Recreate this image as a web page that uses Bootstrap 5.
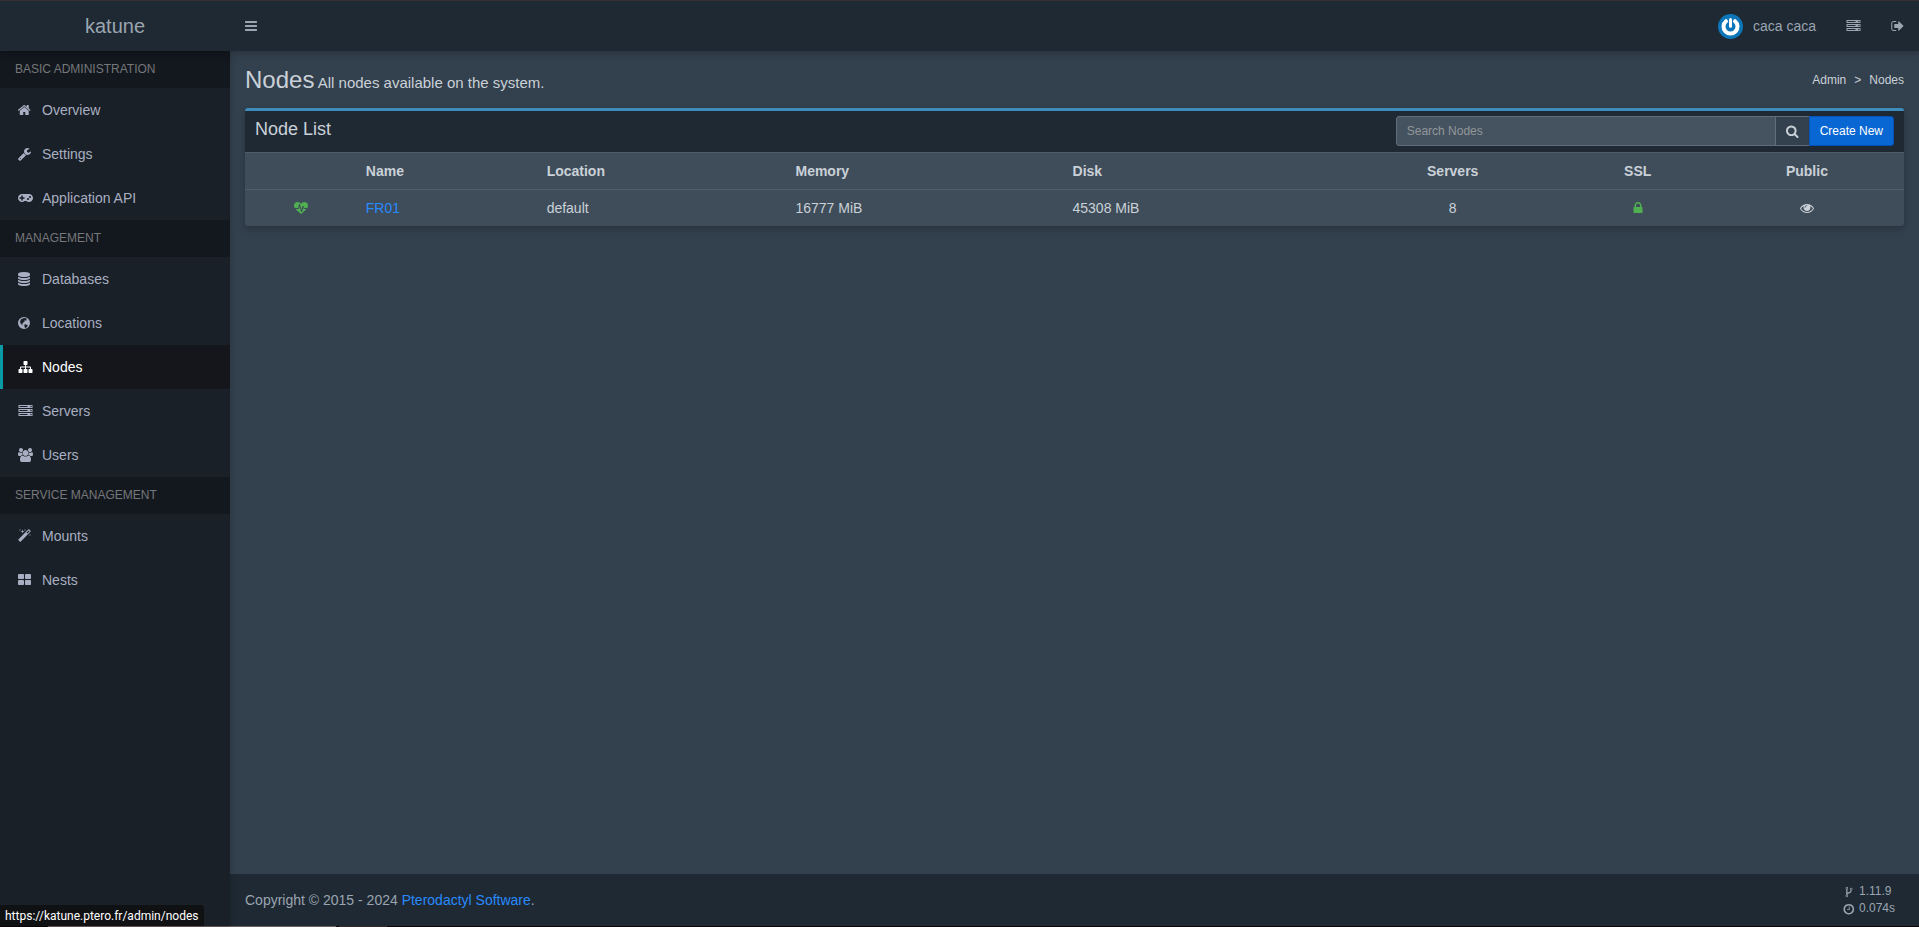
<!DOCTYPE html>
<html lang="en">
<head>
<meta charset="utf-8">
<meta name="viewport" content="width=device-width, initial-scale=1">
<title>Nodes - katune</title>
<link rel="stylesheet" href="https://cdn.jsdelivr.net/npm/bootstrap@5.3.0/dist/css/bootstrap.min.css">
<style>
  :root { --side: 230px; --ink: #cad1d8; --muted: #9aa5b1; --dark: #1f2933; --line: #4f5d6a; --drop: 0 4px 8px 0 rgba(0,0,0,.12), 0 2px 4px 0 rgba(0,0,0,.08); }
  body { font-family: "Liberation Sans", Arial, sans-serif; font-size: 14px; line-height: 20px; color: var(--ink); background: #33404d; }
  a { color: #288afb; text-decoration: none; }
  .icon { width: 14px; height: 14px; fill: currentColor; flex: none; display: block; }
  .icon.wide { width: 15px; }
  .icon.slim { width: 13px; }

  .topbar { background: var(--dark); border-top: 1px solid #35302f; box-shadow: var(--drop); position: relative; z-index: 3; }
  .topbar a, .topbar button { color: var(--muted); padding: 15px; }
  .topbar .logo { width: var(--side); font-size: 20px; text-align: center; }
  .topbar .toggle { background: none; border: 0; }
  .avatar { width: 25px; height: 25px; margin: -3px 10px -3px 0; }

  .sidebar { width: var(--side); flex: none; background: #1a2027; box-shadow: var(--drop); z-index: 2; }
  .sidebar h2 { margin: 0; padding: 10px 15px; font-size: 12px; line-height: 17px; background: #13181e; color: #75777a; text-transform: uppercase; }
  .sidebar a { color: #a8afc2; padding: 12px 5px 12px 15px; border-left: 3px solid transparent; }
  .sidebar a.active { color: #fff; background: #15161b; border-left-color: #099aa5; }
  .sidebar .slot { width: 24px; flex: none; }

  .content-head { padding: 15px 15px 0; }
  .content-head h1 { font-size: 24px; line-height: 27px; margin: 0; }
  .content-head .note { font-size: 15px; line-height: 15px; }
  .crumbs { font-size: 12px; }
  .crumbs a { color: var(--ink); }
  .crumbs .breadcrumb-item + .breadcrumb-item { padding-left: 8px; }
  .crumbs .breadcrumb-item + .breadcrumb-item::before { content: ">"; color: var(--ink); padding-right: 8px; }

  .panel { margin: 15px; border-top: 3px solid #3c8dbc; border-radius: 3px; background: #3f4d5a; box-shadow: var(--drop); }
  .panel-top { background: var(--dark); padding: 5px 10px 6px; }
  .panel-top h3 { font-size: 18px; line-height: 27px; margin: 0; }
  .finder { width: 30.4%; }
  .finder .form-control { height: 30px; padding: 5px 10px; font-size: 12px; line-height: 18px; color: var(--ink); background: #455360; border: 1px solid #606d7b; border-radius: 3px; }
  .finder .form-control::placeholder { color: #929699; }
  .finder .btn { font-size: 12px; line-height: 18px; padding: 5px 10px; color: var(--ink); background: #33404d; border: 1px solid #606d7b; border-radius: 3px; }
  .finder .btn .icon { width: 13px; height: 13px; }
  .finder .btn.create { color: #fff; background: #0967d3; border-color: #0550b3; }

  .nodes { table-layout: fixed; margin: 0; color: var(--ink); --bs-table-bg: transparent; --bs-table-color: var(--ink); }
  .nodes th, .nodes td { border: 0; border-top: 1px solid var(--line); padding: 8px; color: var(--ink); }
  .nodes .icon { margin: 3px auto; }
  .nodes .good { color: #50af51; }
  .c-beat { width: 6.8%; } .c-name { width: 10.9%; } .c-loc { width: 15%; } .c-mem { width: 16.7%; }
  .c-disk { width: 16.6%; } .c-serv { width: 13.6%; } .c-ssl { width: 8.7%; } .c-pub { width: 11.7%; }

  .foot { background: var(--dark); color: var(--muted); border-top: 1px solid #212c36; padding: 15px 15px 16px; }
  .stats { font-size: 12px; line-height: 17px; margin: -7px 9px -7px 0; }
  .stats .icon { width: 12px; height: 12px; }
  .edge { height: 1px; background: linear-gradient(90deg, #0b0708 48px, #6e6264 48px 336px, #0b0708 336px 339px, #35292b 339px 387px, #0b0708 387px); }
  .status-url { position: fixed; left: 0; bottom: 1px; z-index: 5; background: #101113; color: #fff; font: 12px/16px Roboto, sans-serif; padding: 3px 6px 2px 5px; border-top-right-radius: 3px; }
</style>
</head>
<body>
<svg class="d-none" aria-hidden="true">
  <symbol id="bars" viewBox="128 0 1792 1792"><path d="M1664 1344v128q0 26-19 45t-45 19h-1408q-26 0-45-19t-19-45v-128q0-26 19-45t45-19h1408q26 0 45 19t19 45zm0-512v128q0 26-19 45t-45 19h-1408q-26 0-45-19t-19-45v-128q0-26 19-45t45-19h1408q26 0 45 19t19 45zm0-512v128q0 26-19 45t-45 19h-1408q-26 0-45-19t-19-45v-128q0-26 19-45t45-19h1408q26 0 45 19t19 45z"/></symbol>
  <symbol id="home" viewBox="96 0 1792 1792"><path d="M1472 992v480q0 26-19 45t-45 19h-384v-384h-256v384h-384q-26 0-45-19t-19-45v-480q0-1 .5-3t.5-3l575-474 575 474q1 2 1 6zm223-69l-62 74q-8 9-21 11h-3q-13 0-21-7l-692-577-692 577q-12 8-24 7-13-2-21-11l-62-74q-8-10-7-23.5t11-21.5l719-599q32-26 76-26t76 26l244 204v-195q0-14 9-23t23-9h192q14 0 23 9t9 23v408l219 182q10 8 11 21.5t-7 23.5z"/></symbol>
  <symbol id="wrench" viewBox="64 0 1792 1792"><path d="M448 1472q0-26-19-45t-45-19-45 19-19 45 19 45 45 19 45-19 19-45zm644-420l-682 682q-37 37-90 37-52 0-91-37l-106-108q-38-36-38-90 0-53 38-91l681-681q39 98 114.5 173.5t173.5 114.5zm634-435q0 39-23 106-47 134-164.5 217.5t-258.5 83.5q-185 0-316.5-131.5t-131.5-316.5 131.5-316.5 316.5-131.5q58 0 121.5 16.5t107.5 46.5q16 11 16 28t-16 28l-293 169v224l193 107q5-3 79-48.5t135.5-81 70.5-35.5q15 0 23.5 10t8.5 25z"/></symbol>
  <symbol id="gamepad" viewBox="0 128 1920 1792"><path d="M832 1088v-128q0-14-9-23t-23-9h-192v-192q0-14-9-23t-23-9h-128q-14 0-23 9t-9 23v192h-192q-14 0-23 9t-9 23v128q0 14 9 23t23 9h192v192q0 14 9 23t23 9h128q14 0 23-9t9-23v-192h192q14 0 23-9t9-23zm576 64q0-53-37.5-90.5t-90.5-37.5-90.5 37.5-37.5 90.5 37.5 90.5 90.5 37.5 90.5-37.5 37.5-90.5zm256-256q0-53-37.5-90.5t-90.5-37.5-90.5 37.5-37.5 90.5 37.5 90.5 90.5 37.5 90.5-37.5 37.5-90.5zm256 128q0 212-150 362t-362 150q-192 0-338-128h-220q-146 128-338 128-212 0-362-150t-150-362 150-362 362-150h896q212 0 362 150t150 362z"/></symbol>
  <symbol id="database" viewBox="128 0 1792 1792"><path d="M896 768q237 0 443-43t325-127v170q0 69-103 128t-280 93.5-385 34.5-385-34.5-280-93.5-103-128v-170q119 84 325 127t443 43zm0 768q237 0 443-43t325-127v170q0 69-103 128t-280 93.5-385 34.5-385-34.5-280-93.5-103-128v-170q119 84 325 127t443 43zm0-384q237 0 443-43t325-127v170q0 69-103 128t-280 93.5-385 34.5-385-34.5-280-93.5-103-128v-170q119 84 325 127t443 43zm0-1152q208 0 385 34.5t280 93.5 103 128v128q0 69-103 128t-280 93.5-385 34.5-385-34.5-280-93.5-103-128v-128q0-69 103-128t280-93.5 385-34.5z"/></symbol>
  <symbol id="globe" viewBox="1 0 14 14"><path fill-rule="evenodd" d="M7 1a6 6 0 1 0 0 12A6 6 0 0 0 7 1zM6.200 2.200L8.600 2l1.200.8-.6.6.8.7-1.300.6-.7-.6-.6.8.5.7-1.200.5-.9 1.300-1.300.1.300.8 1 .1.300 1-1.300-.7-1.500-1.500L3.200 5l.9-1.700zM7.300 8.500l1.500-.2 1.900.9-.2 1.100-1.500 1.500-1 .1-.5-1.500z"/></symbol>
  <symbol id="sitemap" viewBox="0 0 1792 1792"><path d="M1792 1248v320q0 40-28 68t-68 28h-320q-40 0-68-28t-28-68v-320q0-40 28-68t68-28h96v-192h-512v192h96q40 0 68 28t28 68v320q0 40-28 68t-68 28h-320q-40 0-68-28t-28-68v-320q0-40 28-68t68-28h96v-192h-512v192h96q40 0 68 28t28 68v320q0 40-28 68t-68 28h-320q-40 0-68-28t-28-68v-320q0-40 28-68t68-28h96v-192q0-52 38-90t90-38h512v-192h-96q-40 0-68-28t-28-68v-320q0-40 28-68t68-28h320q40 0 68 28t28 68v320q0 40-28 68t-68 28h-96v192h512q52 0 90 38t38 90v192h96q40 0 68 28t28 68z"/></symbol>
  <symbol id="server" viewBox="0 0 1792 1792"><path d="M128 1408h1024v-128h-1024v128zm0-512h1024v-128h-1024v128zm1568 448q0-40-28-68t-68-28-68 28-28 68 28 68 68 28 68-28 28-68zm-1568-960h1024v-128h-1024v128zm1568 448q0-40-28-68t-68-28-68 28-28 68 28 68 68 28 68-28 28-68zm0-512q0-40-28-68t-68-28-68 28-28 68 28 68 68 28 68-28 28-68zm96 832v384h-1792v-384h1792zm0-512v384h-1792v-384h1792zm0-512v384h-1792v-384h1792z"/></symbol>
  <symbol id="users" viewBox="0 0 1920 1792"><path d="M593 896q-162 5-265 128h-134q-82 0-138-40.5t-56-118.5q0-353 124-353 6 0 43.5 21t97.5 42.5 119 21.5q67 0 133-23-5 37-5 66 0 139 81 256zm1071 637q0 120-73 189.5t-194 69.5h-874q-121 0-194-69.5t-73-189.5q0-53 3.5-103.5t14-109 26.500-108.5 43-97.5 62-81 85.500-53.500 111.500-20q10 0 43 21.500t73 48 107 48 135 21.500 135-21.500 107-48 73-48 43-21.500q61 0 111.500 20t85.500 53.500 62 81 43 97.500 26.500 108.500 14 109 3.500 103.500zm-1024-1277q0 106-75 181t-181 75-181-75-75-181 75-181 181-75 181 75 75 181zm704 384q0 159-112.500 271.500t-271.500 112.500-271.500-112.500-112.500-271.500 112.500-271.500 271.500-112.500 271.500 112.500 112.500 271.500zm576 225q0 78-56 118.500t-138 40.500h-134q-103-123-265-128 81-117 81-256 0-29-5-66 66 23 133 23 59 0 119-21.500t97.500-42.500 43.500-21q124 0 124 353zm-128-609q0 106-75 181t-181 75-181-75-75-181 75-181 181-75 181 75 75 181z"/></symbol>
  <symbol id="magic" viewBox="64 0 1792 1792"><path d="M1254 581l293-293-107-107-293 293zm447-293q0 27-18 45l-1286 1286q-18 18-45 18t-45-18l-198-198q-18-18-18-45t18-45l1286-1286q18-18 45-18t45 18l198 198q18 18 18 45zm-1351-190l98 30-98 30-30 98-30-98-98-30 98-30 30-98zm350 162l196 60-196 60-60 196-60-196-196-60 196-60 60-196zm930 478l98 30-98 30-30 98-30-98-98-30 98-30 30-98zm-640-640l98 30-98 30-30 98-30-98-98-30 98-30 30-98z"/></symbol>
  <symbol id="th" viewBox="64 0 1792 1792"><path d="M832 1024v384q0 52-38 90t-90 38h-512q-52 0-90-38t-38-90v-384q0-52 38-90t90-38h512q52 0 90 38t38 90zm0-768v384q0 52-38 90t-90 38h-512q-52 0-90-38t-38-90v-384q0-52 38-90t90-38h512q52 0 90 38t38 90zm896 768v384q0 52-38 90t-90 38h-512q-52 0-90-38t-38-90v-384q0-52 38-90t90-38h512q52 0 90 38t38 90zm0-768v384q0 52-38 90t-90 38h-512q-52 0-90-38t-38-90v-384q0-52 38-90t90-38h512q52 0 90 38t38 90z"/></symbol>
  <symbol id="signout" viewBox="32 0 1664 1792"><path d="M704 1440q0 4 1 20t.5 26.500-3 23.500-10 19.500-20.500 6.500h-320q-119 0-203.500-84.500t-84.500-203.500v-704q0-119 84.500-203.500t203.500-84.500h320q13 0 22.500 9.500t9.500 22.500q0 4 1 20t.5 26.500-3 23.500-10 19.500-20.500 6.500h-320q-66 0-113 47t-47 113v704q0 66 47 113t113 47h312l11.500 1 11.500 3 8 5.500 7 9 2 13.500zm928-544q0 26-19 45l-544 544q-19 19-45 19t-45-19-19-45v-288h-448q-26 0-45-19t-19-45v-384q0-26 19-45t45-19h448v-288q0-26 19-45t45-19 45 19l544 544q19 19 19 45z"/></symbol>
  <symbol id="search" viewBox="64 64 1728 1728"><path d="M1216 832q0-185-131.500-316.500t-316.500-131.500-316.500 131.500-131.500 316.500 131.500 316.500 316.500 131.500 316.500-131.500 131.500-316.500zm512 832q0 52-38 90t-90 38q-54 0-90-38l-343-342q-179 124-399 124-143 0-273.500-55.500t-225-150-150-225-55.500-273.500 55.500-273.500 150-225 225-150 273.500-55.500 273.500 55.500 225 150 150 225 55.500 273.500q0 220-124 399l343 343q37 37 37 90z"/></symbol>
  <symbol id="lock" viewBox="0 0 1792 1792"><path d="M640 768h512v-192q0-106-75-181t-181-75-181 75-75 181v192zm832 96v576q0 40-28 68t-68 28h-960q-40 0-68-28t-28-68v-576q0-40 28-68t68-28h32v-192q0-184 132-316t316-132 316 132 132 316v192h32q40 0 68 28t28 68z"/></symbol>
  <symbol id="eye" viewBox="0 0 1792 1792"><path d="M1664 960q-152-236-381-353 61 104 61 225 0 185-131.500 316.500t-316.500 131.500-316.500-131.500-131.500-316.500q0-121 61-225-229 117-381 353 133 205 333.500 326.500t434.500 121.500 434.500-121.500 333.500-326.500zm-720-384q0-20-14-34t-34-14q-125 0-214.500 89.500t-89.500 214.500q0 20 14 34t34 14 34-14 14-34q0-86 61-147t147-61q20 0 34-14t14-34zm848 384q0 34-20 69-140 230-376.500 368.500t-499.500 138.500-499.500-139-376.500-368q-20-35-20-69t20-69q140-229 376.500-368t499.500-139 499.500 139 376.500 368q20 35 20 69z"/></symbol>
  <symbol id="clock" viewBox="64 0 1728 1728"><path d="M1024 544v448q0 14-9 23t-23 9h-320q-14 0-23-9t-9-23v-64q0-14 9-23t23-9h224v-352q0-14 9-23t23-9h64q14 0 23 9t9 23zm416 352q0-148-73-273t-198-198-273-73-273 73-198 198-73 273 73 273 198 198 273 73 273-73 198-198 73-273zm224 0q0 209-103 385.500t-279.500 279.500-385.500 103-385.500-103-279.500-279.500-103-385.500 103-385.500 279.500-279.500 385.500-103 385.500 103 279.500 279.500 103 385.500z"/></symbol>
  <symbol id="fork" viewBox="0 0 1792 1792"><path d="M672 1472q0-40-28-68t-68-28-68 28-28 68 28 68 68 28 68-28 28-68zm0-1152q0-40-28-68t-68-28-68 28-28 68 28 68 68 28 68-28 28-68zm640 128q0-40-28-68t-68-28-68 28-28 68 28 68 68 28 68-28 28-68zm96 0q0 52-26 96.500t-70 69.500q-2 287-226 414-67 38-203 81-128 40-169.500 71t-41.500 100v26q44 25 70 69.500t26 96.500q0 80-56 136t-136 56-136-56-56-136q0-52 26-96.500t70-69.500v-820q-44-25-70-69.500t-26-96.500q0-80 56-136t136-56 136 56 56 136q0 52-26 96.500t-70 69.500v497q54-26 154-57 55-17 87.500-29.500t70.500-31 59-39.500 40.500-51 28-69.500 8.500-91.500q-44-25-70-69.500t-26-96.500q0-80 56-136t136-56 136 56 56 136z"/></symbol>
  <symbol id="heartbeat" viewBox="0 0 1792 1792"><path d="M1280 1024h305q-5 6-10 10.500t-9 7.500l-3 4-623 600q-18 18-44 18t-44-18l-624-602q-5-2-21-20h369q22 0 39.500-13.500t22.500-34.500l70-281 190 667q6 20 23 33t39 13q21 0 38-13t23-33l146-485 56 112q18 35 57 35zm512-428q0 145-103 300h-369l-111-221q-8-17-25.500-27t-36.500-8q-45 5-56 46l-129 430-196-686q-6-20-23.500-33t-39.500-13-39 13.500-22 34.500l-116 464h-423q-103-155-103-300 0-220 127-344t351-124q62 0 126.500 21.500t120 58 95.500 68.500 76 68q36-36 76-68t95.500-68.500 120-58 126.500-21.500q224 0 351 124t127 344z"/></symbol>
</svg>

<div class="d-flex flex-column min-vh-100">
  <header class="topbar d-flex align-items-center">
    <a class="logo py-0" href="#">katune</a>
    <button class="toggle" type="button" aria-label="Toggle navigation"><svg class="icon"><use href="#bars"/></svg></button>
    <nav class="d-flex align-items-center ms-auto" aria-label="Account">
      <a class="d-flex align-items-center" href="#">
        <svg class="avatar" viewBox="0 0 25 25" aria-hidden="true"><circle cx="12.500" cy="12.500" r="12.500" fill="#0d76b9"/><path d="M8 7.200A7 7 0 1 0 17 7.200" fill="none" stroke="#fff" stroke-width="4" stroke-linecap="round"/><path d="M12.500 5.600v6.600" stroke="#fff" stroke-width="3" stroke-linecap="round"/></svg>caca caca</a>
      <a href="#" aria-label="Exit admin control"><svg class="icon wide"><use href="#server"/></svg></a>
      <a href="#" aria-label="Logout"><svg class="icon slim"><use href="#signout"/></svg></a>
    </nav>
  </header>

  <div class="d-flex flex-grow-1">
    <nav class="sidebar" aria-label="Administration">
      <h2>Basic Administration</h2>
      <a class="d-flex align-items-center" href="#"><span class="slot"><svg class="icon"><use href="#home"/></svg></span>Overview</a>
      <a class="d-flex align-items-center" href="#"><span class="slot"><svg class="icon"><use href="#wrench"/></svg></span>Settings</a>
      <a class="d-flex align-items-center" href="#"><span class="slot"><svg class="icon wide"><use href="#gamepad"/></svg></span>Application API</a>
      <h2>Management</h2>
      <a class="d-flex align-items-center" href="#"><span class="slot"><svg class="icon"><use href="#database"/></svg></span>Databases</a>
      <a class="d-flex align-items-center" href="#"><span class="slot"><svg class="icon"><use href="#globe"/></svg></span>Locations</a>
      <a class="d-flex align-items-center active" href="#" aria-current="page"><span class="slot"><svg class="icon wide"><use href="#sitemap"/></svg></span>Nodes</a>
      <a class="d-flex align-items-center" href="#"><span class="slot"><svg class="icon wide"><use href="#server"/></svg></span>Servers</a>
      <a class="d-flex align-items-center" href="#"><span class="slot"><svg class="icon wide"><use href="#users"/></svg></span>Users</a>
      <h2>Service Management</h2>
      <a class="d-flex align-items-center" href="#"><span class="slot"><svg class="icon"><use href="#magic"/></svg></span>Mounts</a>
      <a class="d-flex align-items-center" href="#"><span class="slot"><svg class="icon"><use href="#th"/></svg></span>Nests</a>
    </nav>

    <div class="d-flex flex-column flex-grow-1">
      <main class="flex-grow-1">
        <div class="content-head d-flex justify-content-between align-items-center">
          <h1>Nodes<span class="note"> All nodes available on the system.</span></h1>
          <nav class="crumbs" aria-label="Breadcrumb">
            <ol class="breadcrumb m-0">
              <li class="breadcrumb-item"><a href="#">Admin</a></li>
              <li class="breadcrumb-item">Nodes</li>
            </ol>
          </nav>
        </div>

        <section class="panel">
          <div class="panel-top d-flex justify-content-between">
            <h3>Node List</h3>
            <form class="finder input-group flex-nowrap">
              <input class="form-control" type="text" placeholder="Search Nodes" aria-label="Search Nodes">
              <button class="btn d-flex align-items-center" type="submit" aria-label="Search"><svg class="icon"><use href="#search"/></svg></button>
              <a class="btn create text-nowrap" href="#">Create New</a>
            </form>
          </div>
          <table class="table nodes">
            <thead>
              <tr>
                <th class="c-beat"></th><th class="c-name">Name</th><th class="c-loc">Location</th><th class="c-mem">Memory</th><th class="c-disk">Disk</th>
                <th class="c-serv text-center">Servers</th><th class="c-ssl text-center">SSL</th><th class="c-pub text-center">Public</th>
              </tr>
            </thead>
            <tbody>
              <tr>
                <td><svg class="icon good"><use href="#heartbeat"/></svg></td>
                <td><a href="#">FR01</a></td><td>default</td><td>16777 MiB</td><td>45308 MiB</td>
                <td class="text-center">8</td>
                <td><svg class="icon good"><use href="#lock"/></svg></td>
                <td><svg class="icon"><use href="#eye"/></svg></td>
              </tr>
            </tbody>
          </table>
        </section>
      </main>

      <footer class="foot d-flex justify-content-between align-items-center">
        <div>Copyright © 2015 - 2024 <a href="#">Pterodactyl Software</a>.</div>
        <div class="stats">
          <div class="d-flex align-items-center gap-1"><svg class="icon"><use href="#fork"/></svg>1.11.9</div>
          <div class="d-flex align-items-center gap-1"><svg class="icon"><use href="#clock"/></svg>0.074s</div>
        </div>
      </footer>
    </div>
  </div>
  <div class="edge"></div>
</div>
<div class="status-url">https://katune.ptero.fr/admin/nodes</div>
<script src="https://cdn.jsdelivr.net/npm/bootstrap@5.3.0/dist/js/bootstrap.bundle.min.js"></script>
</body>
</html>
